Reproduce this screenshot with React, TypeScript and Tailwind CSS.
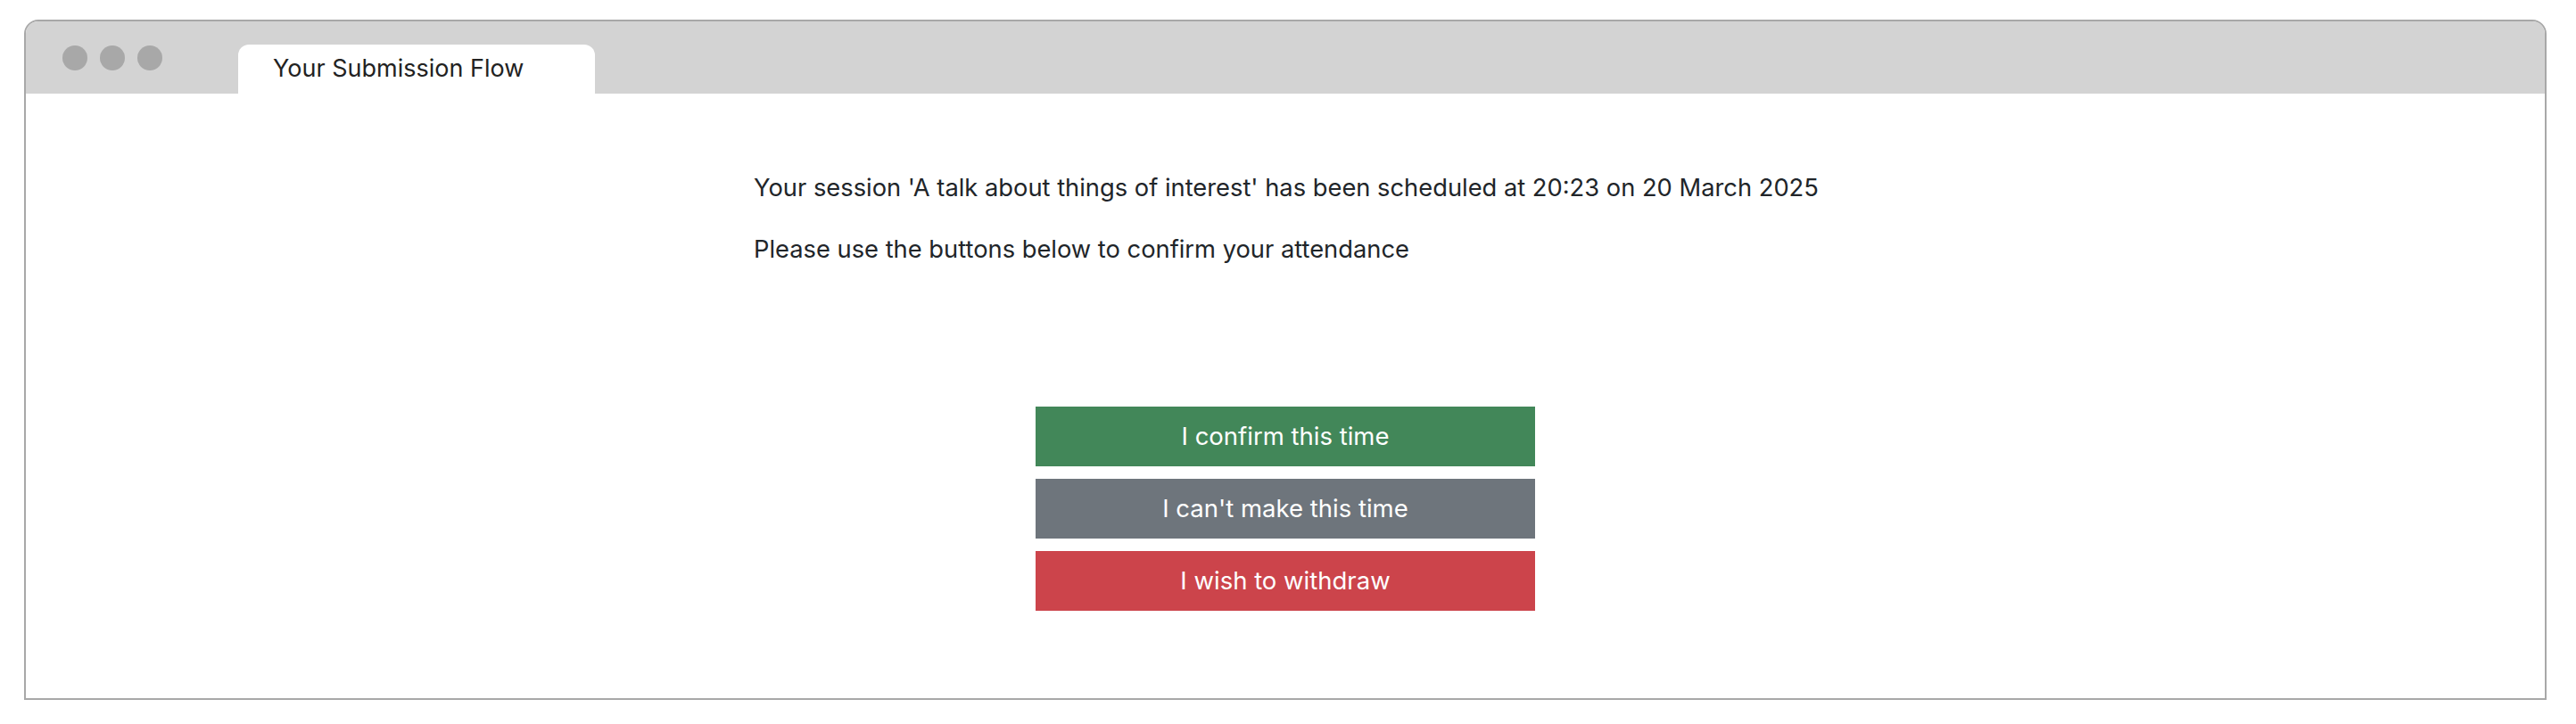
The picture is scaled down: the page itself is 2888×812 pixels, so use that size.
import React from "react";

export default function App() {
  return (
    <div className="w-[2888px] h-[812px] bg-white pt-[22px] font-['Inter',sans-serif]">
      <div className="ml-[27px] w-[2828px] h-[763px] border-2 border-[#a8a8a8] rounded-t-[16px] overflow-hidden flex flex-col">
        <div className="h-[81px] bg-[#d3d3d3] flex pl-[41px] shrink-0">
          <div className="flex gap-[14px] mt-[27px] self-start">
            <div className="w-[28px] h-[28px] rounded-full bg-[#a8a8a8]" />
            <div className="w-[28px] h-[28px] rounded-full bg-[#a8a8a8]" />
            <div className="w-[28px] h-[28px] rounded-full bg-[#a8a8a8]" />
          </div>
          <div className="ml-[85px] self-end h-[55px] w-[400px] bg-white rounded-t-[12px] pl-[39px] flex items-center text-[27px] text-[#222222] whitespace-nowrap">
            Your Submission Flow
          </div>
        </div>
        <div className="flex-1 bg-white flex flex-col items-center">
          <div className="w-[1192px] pt-[88px] text-[27.3px] leading-[36px] text-[#212529] whitespace-nowrap">
            <p>Your session 'A talk about things of interest' has been scheduled at 20:23 on 20 March 2025</p>
            <p className="mt-[33px]">Please use the buttons below to confirm your attendance</p>
          </div>
          <div className="mt-[158px] w-[560px] flex flex-col gap-[14px] text-[27.5px] text-white">
            <button className="h-[67px] bg-[#428759] flex items-center justify-center">I confirm this time</button>
            <button className="h-[67px] bg-[#6e757c] flex items-center justify-center">I can't make this time</button>
            <button className="h-[67px] bg-[#cc444b] flex items-center justify-center">I wish to withdraw</button>
          </div>
        </div>
      </div>
    </div>
  );
}
